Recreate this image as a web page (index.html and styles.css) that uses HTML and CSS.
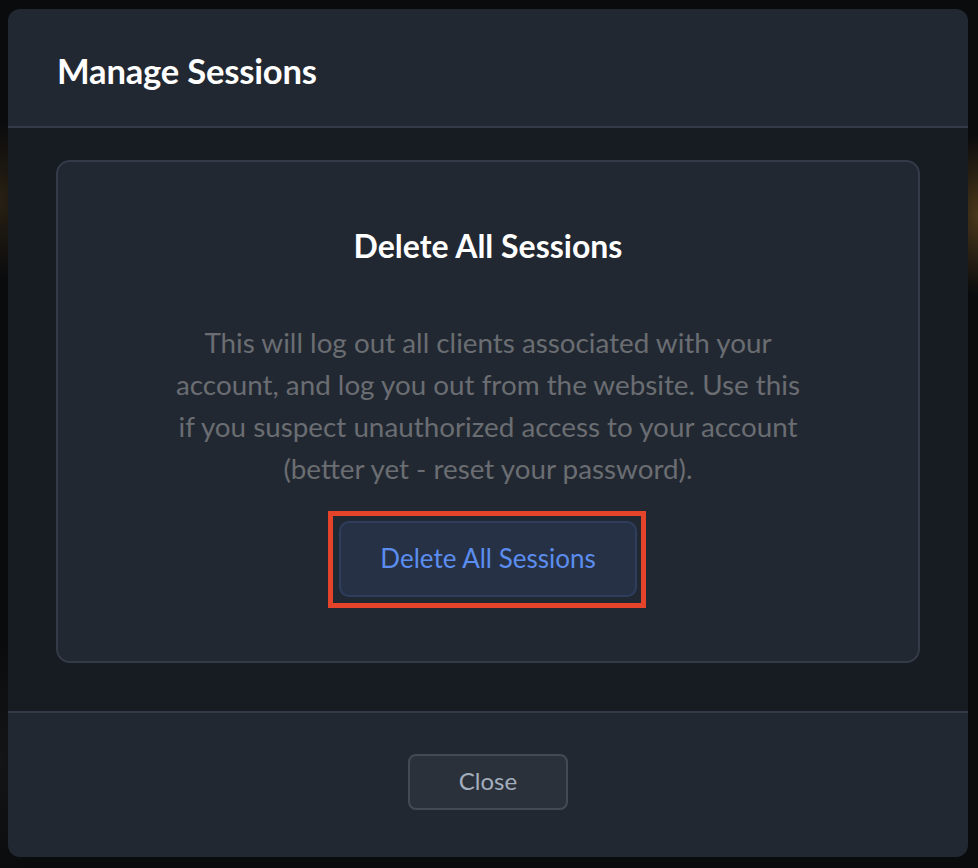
FILE: index.html
```html
<!DOCTYPE html>
<html lang="en">
<head>
<meta charset="utf-8">
<title>Manage Sessions</title>
<link rel="stylesheet" href="styles.css">
</head>
<body>
<div class="backdrop">
  <div class="modal">
    <header class="modal-header">
      <h1 class="modal-title">Manage Sessions</h1>
    </header>
    <main class="modal-body">
      <section class="card">
        <h2 class="card-title">Delete All Sessions</h2>
        <p class="card-text">This will log out all clients associated with your account, and log you out from the website. Use this if you suspect unauthorized access to your account (better yet - reset your password).</p>
        <div class="highlight">
          <button class="btn-danger" type="button">Delete All Sessions</button>
        </div>
      </section>
    </main>
    <footer class="modal-footer">
      <button class="btn-close" type="button">Close</button>
    </footer>
  </div>
</div>
</body>
</html>
```

FILE: styles.css
```css
* { box-sizing: border-box; }
html, body {
  margin: 0;
  height: 100%;
}
body {
  background-color: #0a0b0d;
  background-image:
    radial-gradient(ellipse 40px 80px at 0px 200px, rgba(110, 80, 30, 0.3), transparent),
    radial-gradient(ellipse 40px 80px at 978px 215px, rgba(140, 100, 40, 0.5), transparent),
    radial-gradient(ellipse 60px 120px at 0px 760px, rgba(60, 60, 60, 0.2), transparent);
  font-family: Lato, "Open Sans", sans-serif;
}
.backdrop {
  padding: 9px 10px 11px 8px;
  height: 100%;
}
.modal {
  height: 100%;
  display: flex;
  flex-direction: column;
  background: #222831;
  border-radius: 12px;
  overflow: hidden;
}
.modal-header {
  height: 119px;
  flex: none;
  display: flex;
  align-items: center;
  padding: 0 49px;
  border-bottom: 2px solid #343a47;
}
.modal-title {
  margin: 5px 0 0;
  font-size: 34.6px;
  font-weight: 700;
  color: #ffffff;
  letter-spacing: -0.2px;
}
.modal-body {
  flex: 1;
  background: #171b22;
  padding: 32px 48px 48px 48px;
  border-bottom: 2px solid #343a47;
}
.card {
  height: 503px;
  background: #222831;
  border: 2px solid #343a47;
  border-radius: 14px;
  display: flex;
  flex-direction: column;
  align-items: center;
  padding-top: 64px;
}
.card-title {
  margin: 0;
  font-size: 32px;
  font-weight: 700;
  color: #ffffff;
  line-height: 40px;
}
.card-text {
  margin: 56px 0 0;
  width: 640px;
  text-align: center;
  font-size: 27.8px;
  line-height: 42px;
  color: #6a6d72;
}
.highlight {
  margin: 21px 2px 0 0;
  border: 5px solid #e6432b;
  padding: 5px 4px 6px 6px;
}
.btn-danger {
  display: block;
  width: 298px;
  height: 76px;
  background: #263145;
  border: 2px solid #2f3e5c;
  border-radius: 10px;
  color: #5b8def;
  font-family: Lato, "Open Sans", sans-serif;
  font-size: 26px;
  padding: 0 0 2px;
}
.modal-footer {
  height: 144px;
  flex: none;
  display: flex;
  justify-content: center;
  align-items: flex-start;
  padding-top: 41px;
}
.btn-close {
  width: 160px;
  height: 56px;
  background: #2b313b;
  border: 2px solid #444a55;
  border-radius: 8px;
  color: #a3aebd;
  font-family: Lato, "Open Sans", sans-serif;
  font-size: 24px;
  padding: 0 0 3px;
}
```
